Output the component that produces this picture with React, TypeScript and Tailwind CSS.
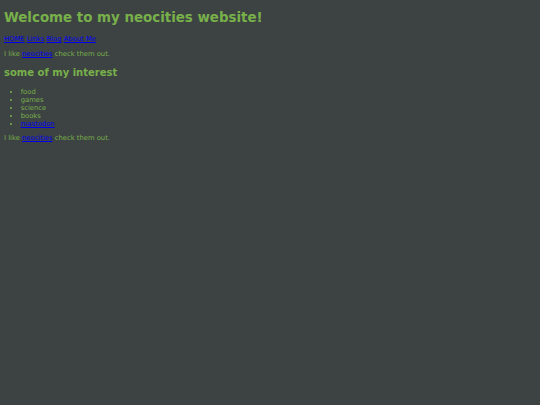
export default function App() {
  const green = "text-[#78b04a]";
  return (
    <div
      className={`flow-root min-h-screen bg-[#3d4343] px-[4px] text-[6.8px] leading-[8px] ${green}`}
      style={{ fontFamily: '"DejaVu Sans", Verdana, sans-serif' }}
    >
      <h1 className="mt-[10.1px] mb-[9.9px] text-[13.4px] font-bold leading-[normal]">
        Welcome to my neocities website!
      </h1>
      <p className="mt-0 mb-[6.7px]">
        <a href="#" className="text-[#0000ee] underline">HOME</a>{" "}
        <a href="#" className="text-[#0000ee] underline">Links</a>{" "}
        <a href="#" className="text-[#0000ee] underline">Blog</a>{" "}
        <a href="#" className="text-[#0000ee] underline">About Me</a>
      </p>
      <p className="mt-0 mb-[9.7px]">
        I like <a href="#" className="text-[#0000ee] underline">neocities</a> check them out.
      </p>
      <h2 className="mt-0 mb-[10.1px] text-[10px] font-bold leading-[normal]">some of my interest</h2>
      <ul className="mt-0 mb-[6px] list-disc pl-[16.7px]">
        <li>food</li>
        <li>games</li>
        <li>science</li>
        <li>books</li>
        <li>
          <a href="#" className="text-[#0000ee] underline">mastodon</a>
        </li>
      </ul>
      <p className="m-0">
        I like <a href="#" className="text-[#0000ee] underline">neocities</a> check them out.
      </p>
    </div>
  );
}
